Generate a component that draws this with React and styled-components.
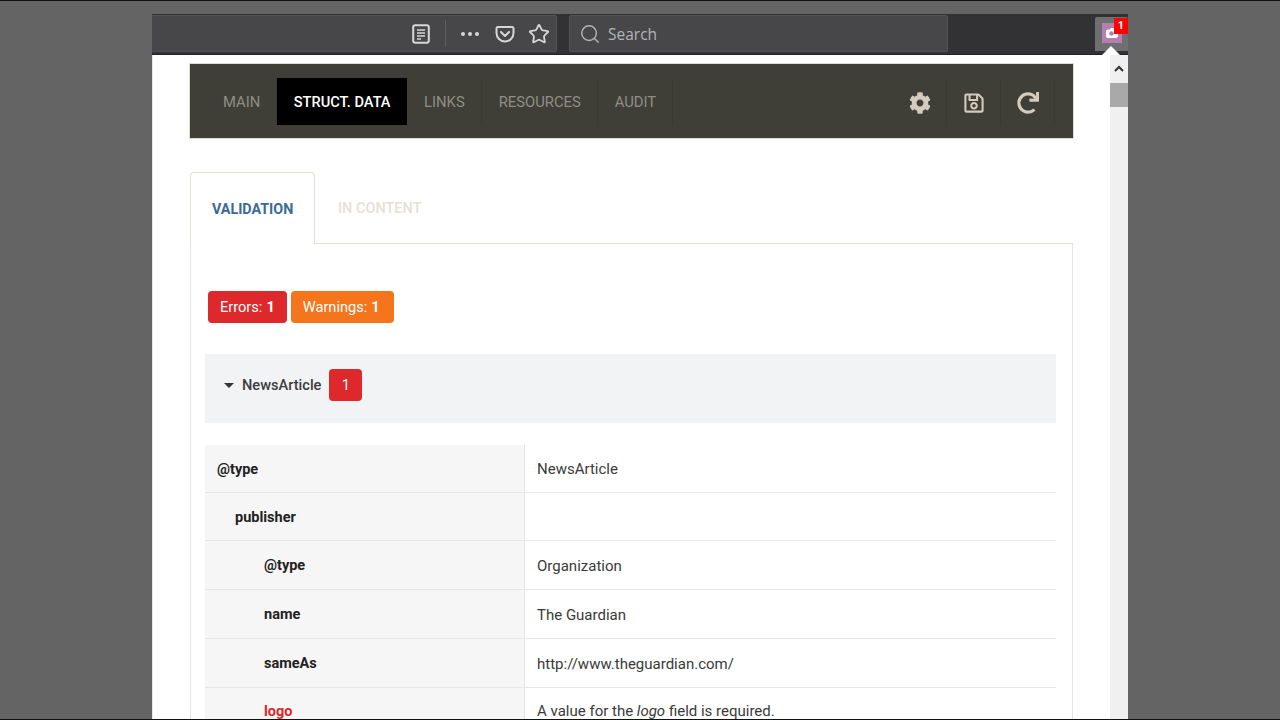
import React from 'react';
import styled, { createGlobalStyle } from 'styled-components';
import { Star, Search } from 'lucide-react';
import { FaCog, FaRegSave, FaRedo } from 'react-icons/fa';

const GlobalStyle = createGlobalStyle`
	html, body {
		margin: 0;
		padding: 0;
		background: #646464;
		overflow: hidden;
	}
	* {
		box-sizing: border-box;
	}
`;

const Stage = styled.div`
	width: 1280px;
	height: 720px;
	overflow: hidden;
	background: #646464;
	border: 1px solid #111;
	border-width: 1px 0;
	padding: 13px 152px 0;
	font-family: Roboto, "Liberation Sans", sans-serif;
`;

const Browser = styled.div`
	width: 976px;
	display: flex;
	flex-direction: column;
`;

const Toolbar = styled.div`
	height: 41px;
	background: #323234;
	border-bottom: 1px solid #232325;
	display: flex;
	align-items: flex-start;
	padding-top: 1px;
`;

const UrlBar = styled.div`
	flex: none;
	width: 405px;
	height: 37px;
	background: #47474a;
	border: 1px solid #545457;
	border-left: 0;
	border-radius: 0 2px 2px 0;
	display: flex;
	align-items: center;
	justify-content: flex-end;
	color: #d6d6d6;
`;

const Reader = styled.svg`
	width: 18px;
	height: 20px;
	margin-right: 15px;
`;

const UrlDivider = styled.div`
	width: 1px;
	height: 27px;
	background: #5d5d60;
	margin-right: 15px;
`;

const Dots = styled.div`
	display: flex;
	gap: 3px;
	margin-right: 16px;
`;

const Dot = styled.span`
	width: 4px;
	height: 4px;
	border-radius: 50%;
	background: #d6d6d6;
`;

const Pocket = styled.svg`
	width: 20px;
	height: 18px;
	margin-right: 13px;
`;

const StarIcon = styled(Star)`
	margin-right: 6px;
`;

const SearchBox = styled.div`
	flex: none;
	width: 379px;
	height: 37px;
	margin-left: 12px;
	background: #47474a;
	border: 1px solid #545457;
	border-radius: 2px;
	display: flex;
	align-items: center;
	gap: 7px;
	padding-left: 9px;
	color: #b4b4b6;
	font-family: "Open Sans", sans-serif;
	font-size: 15.5px;
`;

const ExtensionButton = styled.div`
	flex: none;
	position: relative;
	margin-left: 147px;
	width: 33px;
	height: 34px;
	margin-top: 2px;
	padding: 6px 0 0 7px;
	background: #6f6f72;
	border-radius: 2px 2px 0 0;
`;

const ExtensionIcon = styled.svg`
	display: block;
	width: 20px;
	height: 20px;
`;

const CountFlag = styled.span`
	position: absolute;
	top: 1px;
	right: 0;
	width: 14px;
	height: 16px;
	background: #ff0000;
	color: #fff;
	font-size: 11px;
	font-weight: 700;
	line-height: 15px;
	text-align: center;
`;

const Caret = styled.span`
	position: absolute;
	left: 7px;
	bottom: -4px;
	width: 0;
	height: 0;
	border-left: 9px solid transparent;
	border-right: 9px solid transparent;
	border-bottom: 9px solid #fff;
`;

const Content = styled.div`
	display: flex;
	height: 680px;
`;

const Page = styled.div`
	flex: 1;
	min-width: 0;
	background: #fff;
	padding: 8px 36px 0;
	border-left: 1px solid #e8e8e8;
	overflow: hidden;
`;

const Scrollbar = styled.div`
	flex: none;
	width: 18px;
	background: #f0f0f0;
	display: flex;
	flex-direction: column;
	align-items: center;
`;

const ScrollUp = styled.div`
	width: 100%;
	height: 28px;
	background: #f0f0f0;
	display: flex;
	align-items: center;
	justify-content: center;
`;

const ScrollThumb = styled.div`
	width: 100%;
	height: 24px;
	background: #a9a9a9;
`;

const Nav = styled.div`
	height: 76px;
	background: #3f3f38;
	border: 1px solid #dcdcd8;
	display: flex;
	align-items: center;
	padding: 0 18px 0 16px;
`;

const NavTab = styled.div`
	height: 47px;
	padding: 2px ${p => (p.$active ? '16.5px' : '16px')} 0 ${p => (p.$active ? '16.5px' : '17px')};
	display: flex;
	align-items: center;
	font-size: ${p => (p.$active ? '14.6px' : '14.8px')};
	font-weight: ${p => (p.$active ? 500 : 400)};
	color: ${p => (p.$active ? '#fff' : '#8e8e85')};
	background: ${p => (p.$active ? '#000' : 'transparent')};
	border-right: ${p => (p.$active ? '0' : '1px solid #3a3a33')};
`;

const NavIcons = styled.div`
	margin-left: auto;
	display: flex;
	align-items: center;
	color: #d3cbbd;
`;

const NavIcon = styled.div`
	width: 54px;
	height: 47px;
	padding-top: 4px;
	display: flex;
	align-items: center;
	justify-content: center;
	border-right: 1px solid #3a3a33;
	font-size: 22px;
`;

const Body = styled.div`
	margin: 33px 1px 0;
`;

const Tabs = styled.div`
	display: flex;
	height: 72px;
`;

const Tab = styled.div`
	width: ${p => (p.$active ? '125px' : 'auto')};
	flex: ${p => (p.$active ? 'none' : '1')};
	display: flex;
	align-items: center;
	padding-left: ${p => (p.$active ? '21px' : '23px')};
	padding-top: ${p => (p.$active ? '1px' : '2px')};
	font-size: ${p => (p.$active ? '14.3px' : '14.5px')};
	font-weight: ${p => (p.$active ? 700 : 500)};
	color: ${p => (p.$active ? '#3c6a97' : '#e6e0d8')};
	border: ${p => (p.$active ? '1px solid #e6dfd3' : '0')};
	border-bottom: ${p => (p.$active ? '0' : '1px solid #e6dfd3')};
	border-radius: ${p => (p.$active ? '4px 4px 0 0' : '0')};
	background: #fff;
`;

const Panel = styled.div`
	border: 1px solid #e6e4df;
	border-top: 0;
	padding: 47px 16px 0 14px;
	height: 560px;
`;

const BadgeRow = styled.div`
	display: flex;
	gap: 4px;
	padding-left: 3px;
`;

const Badge = styled.div`
	height: 32px;
	padding: 0 ${p => (p.$kind === 'warning' ? 14 : 12)}px 0 12px;
	display: flex;
	align-items: center;
	gap: 4px;
	border-radius: 4px;
	color: #fff;
	font-size: 14.6px;
	background: ${p => (p.$kind === 'warning' ? '#f5751c' : '#dd282c')};
`;

const Section = styled.div`
	height: 69px;
	margin-top: 31px;
	background: #f2f3f5;
	display: flex;
	align-items: center;
	padding: 0 0 7px 19px;
	color: #3c3c40;
	font-size: 14.6px;
	font-weight: 500;
`;

const SectionCaret = styled.span`
	width: 0;
	height: 0;
	border-left: 5px solid transparent;
	border-right: 5px solid transparent;
	border-top: 5px solid #333;
	margin-right: 8px;
`;

const CountBox = styled.span`
	width: 33px;
	height: 32px;
	margin-left: 8px;
	border-radius: 4px;
	background: #dd282c;
	color: #fff;
	font-size: 14px;
	font-weight: 400;
	display: flex;
	align-items: center;
	justify-content: center;
`;

const Table = styled.div`
	margin-top: 22px;
`;

const Row = styled.div`
	display: grid;
	grid-template-columns: 320px 1fr;
	height: ${p => p.$height || 49}px;
	border-bottom: 1px solid #e6e6e6;
	font-size: 15px;
`;

const KeyCell = styled.div`
	background: #f6f6f6;
	border-right: 1px solid #e3e3e3;
	display: flex;
	align-items: center;
	padding-top: 1px;
	padding-left: ${p => 12 + p.$level * 18 + (p.$level > 1 ? 11 : 0)}px;
	font-size: 14.5px;
	font-weight: 700;
	color: ${p => (p.$error ? '#dd282c' : '#222')};
`;

const ValueCell = styled.div`
	display: flex;
	align-items: center;
	padding-top: 1px;
	padding-left: 12px;
	color: #3a3a3a;
	white-space: pre;
`;

const rows = [
	{ key: '@type', level: 0, value: 'NewsArticle', height: 48 },
	{ key: 'publisher', level: 1, value: '', height: 48 },
	{ key: '@type', level: 2, value: 'Organization' },
	{ key: 'name', level: 2, value: 'The Guardian' },
	{ key: 'sameAs', level: 2, value: 'http://www.theguardian.com/' },
];

const App = () => (
	<Stage>
		<GlobalStyle />
		<Browser>
			<Toolbar>
				<UrlBar>
					<Reader viewBox="0 0 18 20">
						<rect x="1.2" y="1.2" width="15.6" height="17.6" rx="2" fill="none" stroke="#d6d6d6" strokeWidth="2" />
						<path d="M5 6h8M5 9h8M5 12h8M5 15h4" stroke="#d6d6d6" strokeWidth="1.4" />
					</Reader>
					<UrlDivider />
					<Dots>
						<Dot />
						<Dot />
						<Dot />
					</Dots>
					<Pocket viewBox="0 0 20 18">
						<path d="M3 2h14a1.5 1.5 0 0 1 1.5 1.5V8a8.5 8.5 0 0 1-17 0V3.500A1.500 1.500 0 0 1 3 2z" fill="none" stroke="#d6d6d6" strokeWidth="2" />
						<path d="M6 7l4 4 4-4" fill="none" stroke="#d6d6d6" strokeWidth="2" strokeLinecap="round" strokeLinejoin="round" />
					</Pocket>
					<StarIcon size={22} strokeWidth={2} />
				</UrlBar>
				<SearchBox>
					<Search size={22} strokeWidth={1.6} />
					Search
				</SearchBox>
				<ExtensionButton>
					<ExtensionIcon viewBox="0 0 20 20">
						<rect width="20" height="20" fill="#b57fae" />
						<path d="M4 8.500a2 2 0 0 1 2-2h2l1-1.500h3l1 1.500h1a2 2 0 0 1 2 2V13a2 2 0 0 1-2 2H6a2 2 0 0 1-2-2z" fill="#fff" />
						<circle cx="9.500" cy="10.500" r="2.300" fill="#b57fae" />
					</ExtensionIcon>
					<CountFlag>1</CountFlag>
					<Caret />
				</ExtensionButton>
			</Toolbar>
			<Content>
				<Page>
					<Nav>
						<NavTab>MAIN</NavTab>
						<NavTab $active>STRUCT. DATA</NavTab>
						<NavTab>LINKS</NavTab>
						<NavTab>RESOURCES</NavTab>
						<NavTab>AUDIT</NavTab>
						<NavIcons>
							<NavIcon><FaCog /></NavIcon>
							<NavIcon><FaRegSave /></NavIcon>
							<NavIcon><FaRedo /></NavIcon>
						</NavIcons>
					</Nav>
					<Body>
						<Tabs>
							<Tab $active>VALIDATION</Tab>
							<Tab>IN CONTENT</Tab>
						</Tabs>
						<Panel>
							<BadgeRow>
								<Badge>Errors: <b>1</b></Badge>
								<Badge $kind="warning">Warnings: <b>1</b></Badge>
							</BadgeRow>
							<Section>
								<SectionCaret />
								NewsArticle
								<CountBox>1</CountBox>
							</Section>
							<Table>
								{rows.map((row, i) => (
									<Row key={i} $height={row.height}>
										<KeyCell $level={row.level}>{row.key}</KeyCell>
										<ValueCell>{row.value}</ValueCell>
									</Row>
								))}
								<Row $height={46}>
									<KeyCell $level={2} $error>logo</KeyCell>
									<ValueCell>A value for the <em>logo</em> field is required.</ValueCell>
								</Row>
							</Table>
						</Panel>
					</Body>
				</Page>
				<Scrollbar>
					<ScrollUp>
						<svg width="12" height="8" viewBox="0 0 12 8">
							<path d="M2 6l4-4 4 4" fill="none" stroke="#333" strokeWidth="2" />
						</svg>
					</ScrollUp>
					<ScrollThumb />
				</Scrollbar>
			</Content>
		</Browser>
	</Stage>
);

export default App;
